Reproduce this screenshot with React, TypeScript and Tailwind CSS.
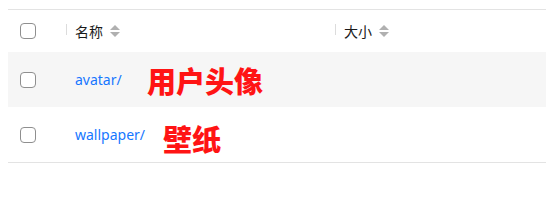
import React from "react";

const SortIcon = () => (
  <svg width="10" height="12" viewBox="0 0 10 12" className="ml-[7px]">
    <path d="M5 0 L10 5 L0 5 Z" fill="#b0b0b0" />
    <path d="M5 12 L10 7 L0 7 Z" fill="#b0b0b0" />
  </svg>
);

const Checkbox = () => (
  <div className="w-4 h-4 rounded-[4px] border border-[#8f8f8f] bg-white" />
);

export default function App() {
  const rows = [
    { name: "avatar/", note: "用户头像", bg: "bg-[#f6f6f6]", noteLeft: "left-[80px]", noteTop: "top-[14px]" },
    { name: "wallpaper/", note: "壁纸", bg: "bg-white", noteLeft: "left-[96px]", noteTop: "top-[17px]" },
  ];
  return (
    <div
      className="w-[546px] h-[211px] bg-white pt-[9px] pl-2"
      style={{ fontFamily: '"Noto Sans", "Noto Sans CJK SC", sans-serif' }}
    >
      <div className="w-[538px] border-t border-b border-[#e3e3e3]">
        <div className="flex items-center h-[42px] text-[14px] text-[#1a1a1a]">
          <div className="w-[59px] pl-3 flex items-center h-full relative">
            <Checkbox />
            <div className="absolute right-0 top-[14px] w-px h-[11px] bg-[#dcdcdc]" />
          </div>
          <div className="w-[269px] pl-2 flex items-center h-full relative">
            <span>名称</span>
            <SortIcon />
            <div className="absolute right-0 top-[14px] w-px h-[11px] bg-[#dcdcdc]" />
          </div>
          <div className="flex-1 pl-2 flex items-center h-full">
            <span>大小</span>
            <SortIcon />
          </div>
        </div>
        {rows.map((r) => (
          <div key={r.name} className={`flex items-center h-[55px] ${r.bg}`}>
            <div className="w-[59px] pl-3 flex items-center">
              <Checkbox />
            </div>
            <div className="w-[269px] pl-2 h-full flex items-center relative">
              <span className="text-[14px] text-[#1677ff]">{r.name}</span>
              <span
                className={`absolute ${r.noteLeft} ${r.noteTop} text-[29px] leading-[29px] font-black text-[#ff1414]`}
                style={{ fontFamily: '"Noto Sans CJK SC", sans-serif' }}
              >
                {r.note}
              </span>
            </div>
            <div className="flex-1" />
          </div>
        ))}
      </div>
    </div>
  );
}
